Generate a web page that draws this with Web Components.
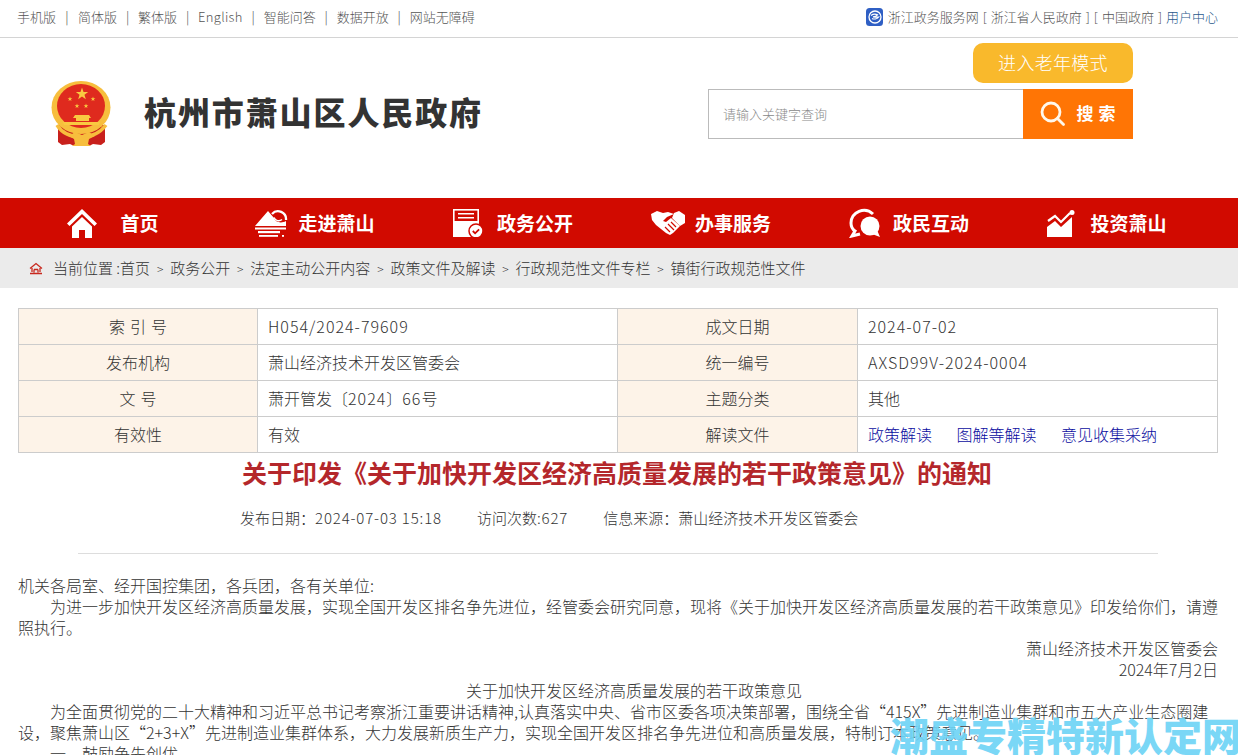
<!DOCTYPE html>
<html lang="zh">
<head>
<meta charset="utf-8">
<title>杭州市萧山区人民政府</title>
<style>
  html, body { margin: 0; padding: 0; background: #fff; height: 755px; overflow: hidden; }
  body { font-family: "Noto Sans CJK SC", "Liberation Sans", sans-serif; position: relative; }
</style>
</head>
<body>
<gov-topbar></gov-topbar>
<gov-header></gov-header>
<gov-nav></gov-nav>
<gov-crumbs></gov-crumbs>
<gov-meta-table></gov-meta-table>
<gov-article></gov-article>
<gov-watermark></gov-watermark>

<script>
const FONT = `"Noto Sans CJK SC", "Liberation Sans", sans-serif`;

class GovTopbar extends HTMLElement {
  connectedCallback() {
    const left = ['手机版', '简体版', '繁体版', '<span class="en">English</span>', '智能问答', '数据开放', '网站无障碍'];
    this.attachShadow({ mode: 'open' }).innerHTML = `
      <style>
        :host { display: flex; justify-content: space-between; align-items: center; height: 37px; box-sizing: content-box;
          padding: 0 20px 0 17px; border-bottom: 1px solid #d4d4d4; font: 300 13px/1 ${FONT}; color: #555; }
        .left, .right { display: flex; align-items: center; padding-bottom: 4px; }
        .sep { width: 21px; text-align: center; color: #444; }
        .sep:nth-child(2) { width: 22px; }
        .en { letter-spacing: .3px; }
        .logo { margin-right: 5px; display: block; }
        .links { word-spacing: 1.100px; }
        .user { color: #2a5a8c; }
      </style>
      <div class="left">${left.map((t, i) => `${i ? '<span class="sep">|</span>' : ''}<span>${t}</span>`).join('')}</div>
      <div class="right">
        <svg class="logo" width="17" height="18" viewBox="0 0 17 18">
          <rect width="17" height="18" rx="3.500" fill="#2f5fc4"/>
          <circle cx="9" cy="9" r="6" fill="none" stroke="#fff" stroke-width="1.300"/>
          <path d="M5 7.500c2-1.400 4.500-1.600 6.500-.6-1 1.200-3 1.800-4.500 2 2 .2 4 .4 5.500.2-1.500 1.800-4.500 2.400-6.500 1.400" fill="none" stroke="#fff" stroke-width="1.200"/>
        </svg>
        <span class="links">浙江政务服务网 [ 浙江省人民政府 ] [ 中国政府 ] <span class="user">用户中心</span></span>
      </div>`;
  }
}
customElements.define('gov-topbar', GovTopbar);

class GovHeader extends HTMLElement {
  connectedCallback() {
    this.attachShadow({ mode: 'open' }).innerHTML = `
      <style>
        :host { display: flex; justify-content: space-between; height: 160px; padding: 0 105px 0 51px; }
        .brand { display: flex; align-items: center; gap: 32px; height: 152px; }
        h1 { margin: 0 0 6px; font: 900 32px/1 ${FONT}; color: #333; letter-spacing: 1.900px; }
        .tools { display: flex; flex-direction: column; align-items: flex-end; padding-top: 5px; gap: 6px; }
        .elder { width: 160px; height: 40px; border-radius: 10px; background: #f9b92c; color: #fff;
          font: 300 18px/38px ${FONT}; letter-spacing: .3px; text-align: center; }
        .search { display: flex; width: 425px; height: 50px; }
        .field { flex: 1; border: 1px solid #bbb; border-right: 0; padding-left: 14px; font: 300 13px/47px ${FONT}; color: #888; }
        .btn { width: 110px; background: #ff7505; color: #fff; display: flex; align-items: center; justify-content: center;
          gap: 11px; font: 700 17px/1 ${FONT}; letter-spacing: 5px; padding-left: 4px; box-sizing: border-box; }
        .btn span { padding-bottom: 3px; }
      </style>
      <div class="brand">
        <svg width="61" height="66" viewBox="0 0 61 66">
          <defs><polygon id="s" points="0,-1 .235,-.324 .951,-.309 .38,.124 .588,.809 0,.4 -.588,.809 -.38,.124 -.951,-.309 -.235,-.324"/></defs>
          <path d="M7 44v17l4 3 8-1 4 2h15l4-2 8 1 4-3V44z" fill="#c8201c"/>
          <ellipse cx="30" cy="26.500" rx="29.500" ry="26.500" fill="#f7be3d"/>
          <ellipse cx="30" cy="25" rx="24" ry="22" fill="#df2a1e"/>
          <g fill="#f9c941">
            <use href="#s" transform="translate(31 13) scale(6.500)"/>
            <use href="#s" transform="translate(19 18) scale(2.500)"/>
            <use href="#s" transform="translate(42 18) scale(2.500)"/>
            <use href="#s" transform="translate(26 25) scale(2.500)"/>
            <use href="#s" transform="translate(35 25) scale(2.500)"/>
            <path d="M24 34h14l2 3h-2v3H25v-3h-3zM12 41h37l-1 3H13z"/>
          </g>
          <path d="M6 44c5 8 14 12 24 12s19-4 25-12" fill="none" stroke="#f7be3d" stroke-width="3.500"/>
          <path d="M18 55l6-4 7 3 7-3 6 4-6 3-1 5 3 2H21l3-2-1-5z" fill="#f7be3d"/>
        </svg>
        <h1>杭州市萧山区人民政府</h1>
      </div>
      <div class="tools">
        <div class="elder">进入老年模式</div>
        <div class="search">
          <div class="field">请输入关键字查询</div>
          <div class="btn">
            <svg width="26" height="26" viewBox="0 0 26 26" fill="none" stroke="#fff8ec" stroke-width="2.800" stroke-linecap="round">
              <circle cx="11" cy="11" r="9"/><path d="M17.500 17.500l6 6"/>
            </svg>
            <span>搜索</span>
          </div>
        </div>
      </div>`;
  }
}
customElements.define('gov-header', GovHeader);

const NAV_ICONS = {
  home: `<svg width="30" height="29" viewBox="0 0 30 29" fill="#fff"><path d="M15 0 0 14.500l2.500 2.500L15 5l12.500 12 2.500-2.500z"/><path d="M15 8 5 17.500V29h7v-8h6v8h7V17.500z"/></svg>`,
  hill: `<svg width="33" height="28" viewBox="0 0 33 28" fill="#fff"><path d="M0 17 13 2l6 7c1 4 7 6 12 3v5z"/><path d="M17 5a8 8 0 0 1 14 6" fill="none" stroke="#fff" stroke-width="2.300"/><path d="M19 8.500a5 5 0 0 0 8 2" fill="none" stroke="#fff" stroke-width="1.500"/><rect y="18.500" width="31" height="2"/><rect x="3" y="22" width="22" height="2.200"/><rect x="4" y="26" width="19" height="1.800"/><rect x="27" y="26" width="2" height="1.800"/></svg>`,
  doc: `<svg width="30" height="28" viewBox="0 0 30 28"><rect x=".8" y=".8" width="24.400" height="14" fill="none" stroke="#fff" stroke-width="1.600"/><path d="M5 4h16v1.500H5zM5 8h16v1.500H5z" fill="#fff"/><path d="M0 12h26v16H0z" fill="#fff"/><circle cx="23" cy="22" r="7" fill="#fff" stroke="#d10a00" stroke-width="1.500"/><path d="M19.800 22l2.300 2.300 4-4" fill="none" stroke="#d10a00" stroke-width="1.800"/></svg>`,
  hands: `<svg width="34" height="24" viewBox="0 0 34 24" fill="#fff"><path d="M0 3 6 0l6 2 5-1 6 2-7 3-4 4 3 1 5-4 9 8-7 7-3 2-4-2-5-4-5-4-4-5z"/><path d="M23 2l5-2 6 4v8l-5 3-8-8z"/><path d="M14 16l5 5M17 13l6 6M20 11l5 5" stroke="#d10a00" stroke-width="1.200" fill="none"/></svg>`,
  chat: `<svg width="32" height="30" viewBox="0 0 32 30"><path d="M24 6A13 13 0 0 0 2 15c0 3 1 6 4 8l-3 5 8-2" fill="none" stroke="#fff" stroke-width="3"/><circle cx="21" cy="18" r="9.500" fill="#fff"/><path d="M23 26l8 3-3-7z" fill="#fff"/></svg>`,
  chart: `<svg width="28" height="27" viewBox="0 0 28 27" fill="#fff"><path d="M1 11l7-5 6 6 9-9" fill="none" stroke="#fff" stroke-width="2.200"/><circle cx="25" cy="2.500" r="2.500"/><path d="M0 17l8-6 6 6 11-10v2 18H0z"/></svg>`
};

class GovNav extends HTMLElement {
  connectedCallback() {
    // gap and nudge per item, the items are not evenly packed in the original
    const items = [['home', '首页', 23, 8], ['hill', '走进萧山', 10, 0], ['doc', '政务公开', 14, 0], ['hands', '办事服务', 10, 0], ['chat', '政民互动', 12, 0], ['chart', '投资萧山', 15, 0]];
    this.attachShadow({ mode: 'open' }).innerHTML = `
      <style>
        :host { display: flex; height: 50px; background: #d10a00; padding-left: 18px; }
        a { width: 198px; display: flex; align-items: center; justify-content: center; color: #fff;
          font: 700 19px/1 ${FONT}; box-sizing: border-box; }
        a span { padding-bottom: 2px; }
        svg { display: block; flex: none; }
      </style>
      ${items.map(([icon, label, gap, nudge]) => `<a style="gap:${gap}px;padding-right:${nudge}px">${NAV_ICONS[icon]}<span>${label}</span></a>`).join('')}`;
  }
}
customElements.define('gov-nav', GovNav);

class GovCrumbs extends HTMLElement {
  connectedCallback() {
    const path = ['首页', '政务公开', '法定主动公开内容', '政策文件及解读', '行政规范性文件专栏', '镇街行政规范性文件'];
    this.attachShadow({ mode: 'open' }).innerHTML = `
      <style>
        :host { display: flex; align-items: center; height: 40px; background: #ebebeb; padding-left: 29px;
          font: 300 15px/1 ${FONT}; color: #333; }
        svg { margin-right: 10px; }
        .path { padding-bottom: 2px; }
        .gt { display: inline-block; width: 20.100px; text-align: center; font-size: 12px; }
      </style>
      <svg width="14" height="13" viewBox="0 0 14 13" fill="none" stroke="#c8281e" stroke-width="1.300">
        <path d="M1 6.500 7 1.500l6 5M3 6v4M11 6v4M5 7.500h4M5 7.500v3M9 7.500v3M1 11.500h12"/>
      </svg>
      <span class="path">当前位置 :${path.join('<span class="gt">&gt;</span>')}</span>`;
  }
}
customElements.define('gov-crumbs', GovCrumbs);

class GovMetaTable extends HTMLElement {
  connectedCallback() {
    const rows = [
      ['索 引 号', '<span class="n">H054/2024-79609</span>', '成文日期', '<span class="n">2024-07-02</span>'],
      ['发布机构', '萧山经济技术开发区管委会', '统一编号', '<span class="n">AXSD99V-2024-0004</span>'],
      ['文 号', '萧开管发〔<span class="n">2024</span>〕<span class="n">66</span>号', '主题分类', '其他'],
      ['有效性', '有效', '解读文件', '<a>政策解读</a><a>图解等解读</a><a>意见收集采纳</a>']
    ];
    this.attachShadow({ mode: 'open' }).innerHTML = `
      <style>
        :host { display: grid; grid-template-columns: 239px 360px 240px 1fr; margin: 20px 20px 0 18px;
          border-top: 1px solid #ccc; border-left: 1px solid #ccc; font: 300 16px/34px ${FONT}; color: #333; }
        div { height: 35px; border-right: 1px solid #ccc; border-bottom: 1px solid #ccc; overflow: hidden; white-space: nowrap; }
        .k { background: #fdf3e8; text-align: center; word-spacing: 1.500px; }
        .v { padding-left: 10px; }
        .n { letter-spacing: 1px; }
        a { color: #0a0ca0; margin-right: 24.500px; }
      </style>
      ${rows.map(r => `<div class="k">${r[0]}</div><div class="v">${r[1]}</div><div class="k">${r[2]}</div><div class="v">${r[3]}</div>`).join('')}`;
  }
}
customElements.define('gov-meta-table', GovMetaTable);

class GovArticle extends HTMLElement {
  connectedCallback() {
    this.attachShadow({ mode: 'open' }).innerHTML = `
      <style>
        :host { display: block; padding: 0 20px 0 18px; font: 300 16px/21px ${FONT}; color: #333; }
        h2 { margin: 0; padding: 1px 2px 0 0; height: 40px; font: 700 25px/36px ${FONT}; color: #b4272b; text-align: center; }
        .info { display: flex; gap: 35px; margin-top: 13px; padding-left: 222px; font-size: 15px; }
        .n { letter-spacing: .85px; }
        hr { border: 0; border-top: 1px solid #ddd; margin: 25px 60px 21px; }
        p { margin: 0; }
        .in { text-indent: 32px; }
        .r { text-align: right; }
        .c { text-align: center; text-indent: 32px; }
      </style>
      <h2>关于印发《关于加快开发区经济高质量发展的若干政策意见》的通知</h2>
      <div class="info"><span>发布日期：<span class="n">2024-07-03 15:18</span></span><span>访问次数<span class="n">:627</span></span><span>信息来源：萧山经济技术开发区管委会</span></div>
      <hr>
      <p>机关各局室、经开国控集团，各兵团，各有关单位:</p>
      <p class="in">为进一步加快开发区经济高质量发展，实现全国开发区排名争先进位，经管委会研究同意，现将《关于加快开发区经济高质量发展的若干政策意见》印发给你们，请遵照执行。</p>
      <p class="r">萧山经济技术开发区管委会</p>
      <p class="r">2024年7月2日</p>
      <p class="c">关于加快开发区经济高质量发展的若干政策意见</p>
      <p class="in">为全面贯彻党的二十大精神和习近平总书记考察浙江重要讲话精神,认真落实中央、省市区委各项决策部署，围绕全省“415X”先进制造业集群和市五大产业生态圈建设，聚焦萧山区“2+3+X”先进制造业集群体系，大力发展新质生产力，实现全国开发区排名争先进位和高质量发展，特制订本政策意见。</p>
      <p class="in">一、鼓励争先创优</p>`;
  }
}
customElements.define('gov-article', GovArticle);

class GovWatermark extends HTMLElement {
  connectedCallback() {
    this.attachShadow({ mode: 'open' }).innerHTML = `
      <style>
        :host { position: absolute; left: 890px; top: 708px; width: 348px; height: 47px; overflow: hidden;
          font: 900 39px/52px ${FONT}; color: #6fd4f6; opacity: .92; white-space: nowrap; pointer-events: none; }
      </style>
      <span>潮盛专精特新认定网</span>`;
  }
}
customElements.define('gov-watermark', GovWatermark);
</script>
</body>
</html>
